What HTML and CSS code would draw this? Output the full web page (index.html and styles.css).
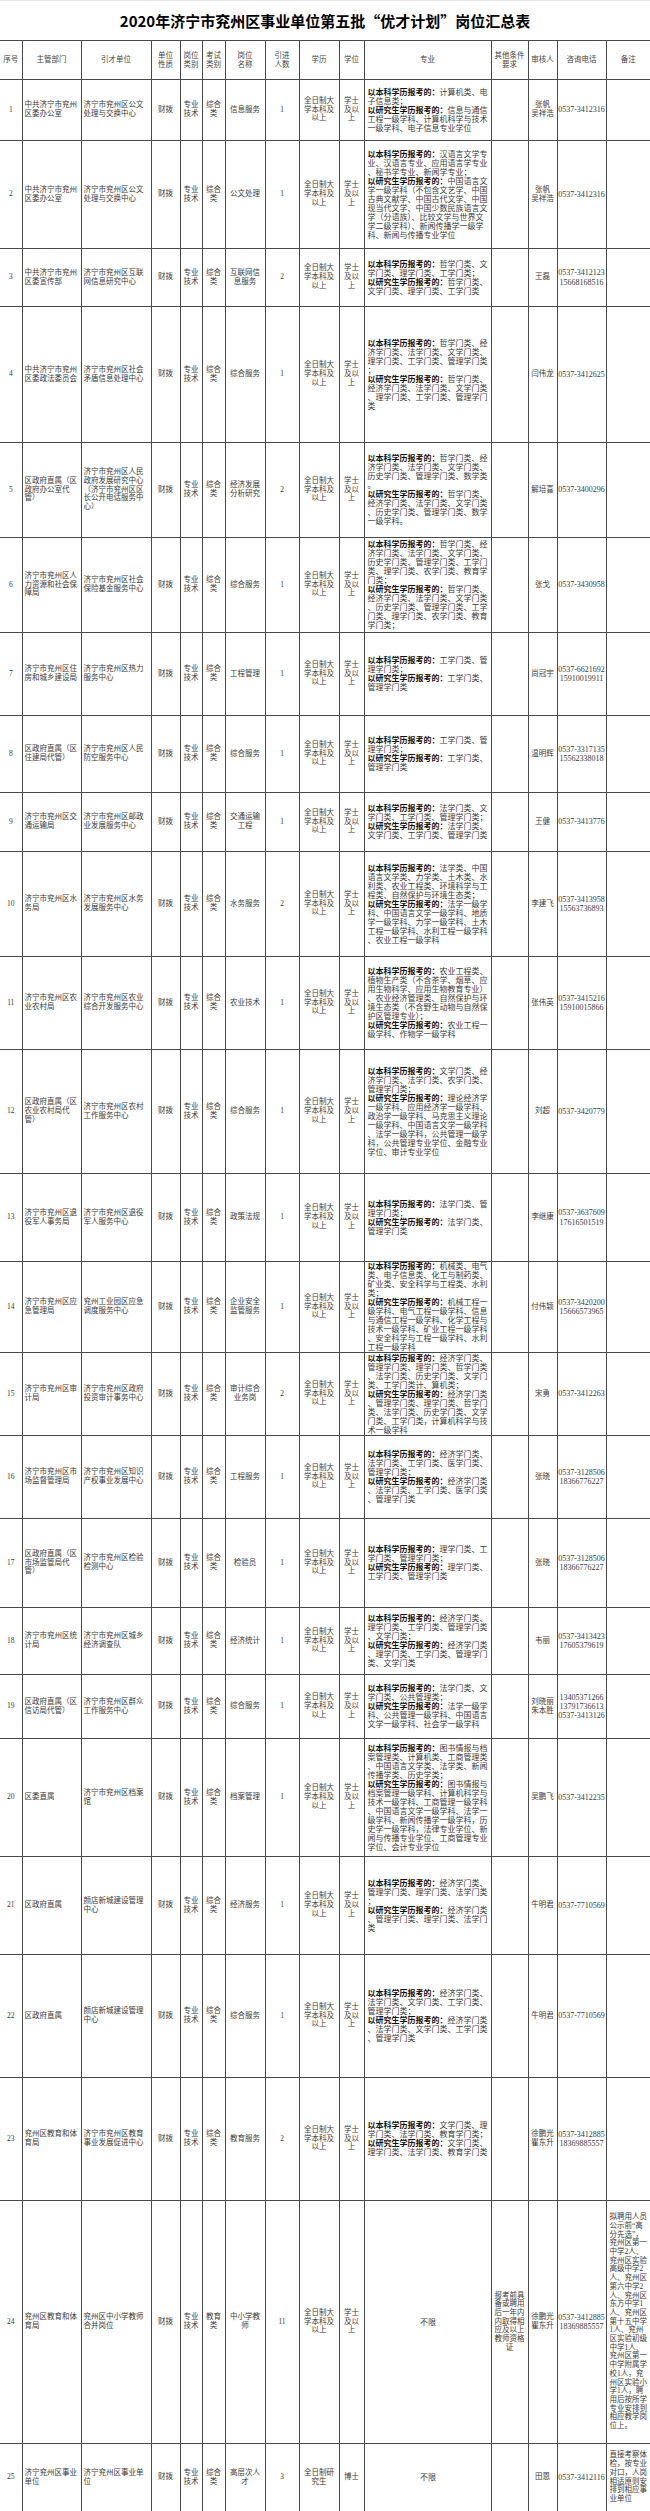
FILE: index.html
```html
<!DOCTYPE html>
<html lang="zh-CN">
<head>
<meta charset="utf-8">
<title>2020年济宁市兖州区事业单位第五批“优才计划”岗位汇总表</title>
<link rel="stylesheet" href="styles.css">
</head>
<body>
<div class="page">
  <h1 class="title">2020年济宁市兖州区事业单位第五批“优才计划”岗位汇总表</h1>
  <table class="grid">
    <colgroup>
      <col class="c-no"><col class="c-dept"><col class="c-unit"><col class="c-nature"><col class="c-type"><col class="c-exam"><col class="c-post"><col class="c-num"><col class="c-edu"><col class="c-deg"><col class="c-major"><col class="c-other"><col class="c-check"><col class="c-tel"><col class="c-note">
    </colgroup>
    <thead>
      <tr>
        <th>序号</th><th>主管部门</th><th>引才单位</th><th>单位<br>性质</th><th>岗位<br>类别</th><th>考试<br>类别</th><th>岗位<br>名称</th><th>引进<br>人数</th><th>学历</th><th>学位</th><th>专业</th><th>其他条件<br>要求</th><th>审核人</th><th>咨询电话</th><th>备注</th>
      </tr>
    </thead>
    <tbody>
      <tr>
        <td>1</td><td>中共济宁市兖州区委办公室</td><td>济宁市兖州区公文处理与交换中心</td><td>财拨</td><td>专业技术</td><td>综合类</td><td>信息服务</td><td>1</td><td>全日制大学本科及以上</td><td>学士及以上</td>
        <td><b>以本科学历报考的：</b>计算机类、电子信息类；<br><b>以研究生学历报考的：</b>信息与通信工程一级学科、计算机科学与技术一级学科、电子信息专业学位</td>
        <td></td><td>张帆<br>吴祥浩</td><td>0537-3412316</td><td></td>
      </tr>
      <tr>
        <td>2</td><td>中共济宁市兖州区委办公室</td><td>济宁市兖州区公文处理与交换中心</td><td>财拨</td><td>专业技术</td><td>综合类</td><td>公文处理</td><td>1</td><td>全日制大学本科及以上</td><td>学士及以上</td>
        <td><b>以本科学历报考的：</b>汉语言文学专业、汉语言专业、应用语言学专业、秘书学专业、新闻学专业；<br><b>以研究生学历报考的：</b>中国语言文学一级学科（不包含文艺学、中国古典文献学、中国古代文学、中国现当代文学、中国少数民族语言文学（分语族）、比较文学与世界文学二级学科）、新闻传播学一级学科、新闻与传播专业学位</td>
        <td></td><td>张帆<br>吴祥浩</td><td>0537-3412316</td><td></td>
      </tr>
      <tr>
        <td>3</td><td>中共济宁市兖州区委宣传部</td><td>济宁市兖州区互联网信息研究中心</td><td>财拨</td><td>专业技术</td><td>综合类</td><td>互联网信息服务</td><td>2</td><td>全日制大学本科及以上</td><td>学士及以上</td>
        <td><b>以本科学历报考的：</b>哲学门类、文学门类、理学门类、工学门类；<br><b>以研究生学历报考的：</b>哲学门类、文学门类、理学门类、工学门类</td>
        <td></td><td>王磊</td><td>0537-3412123<br>15668168516</td><td></td>
      </tr>
      <tr>
        <td>4</td><td>中共济宁市兖州区委政法委员会</td><td>济宁市兖州区社会矛盾信息处理中心</td><td>财拨</td><td>专业技术</td><td>综合类</td><td>综合服务</td><td>1</td><td>全日制大学本科及以上</td><td>学士及以上</td>
        <td><b>以本科学历报考的：</b>哲学门类、经济学门类、法学门类、文学门类、理学门类、工学门类、管理学门类；<br><b>以研究生学历报考的：</b>哲学门类、经济学门类、法学门类、文学门类、理学门类、工学门类、管理学门类</td>
        <td></td><td>闫伟龙</td><td>0537-3412625</td><td></td>
      </tr>
      <tr>
        <td>5</td><td>区政府直属（区政府办公室代管）</td><td>济宁市兖州区人民政府发展研究中心（济宁市兖州区区长公开电话服务中心）</td><td>财拨</td><td>专业技术</td><td>综合类</td><td>经济发展分析研究</td><td>2</td><td>全日制大学本科及以上</td><td>学士及以上</td>
        <td><b>以本科学历报考的：</b>哲学门类、经济学门类、法学门类、文学门类、历史学门类、管理学门类、数学类。<br><b>以研究生学历报考的：</b>哲学门类、经济学门类、法学门类、文学门类、历史学门类、管理学门类、数学一级学科。</td>
        <td></td><td>解培喜</td><td>0537-3400296</td><td></td>
      </tr>
      <tr>
        <td>6</td><td>济宁市兖州区人力资源和社会保障局</td><td>济宁市兖州区社会保险基金服务中心</td><td>财拨</td><td>专业技术</td><td>综合类</td><td>综合服务</td><td>1</td><td>全日制大学本科及以上</td><td>学士及以上</td>
        <td><b>以本科学历报考的：</b>哲学门类、经济学门类、法学门类、文学门类、历史学门类、管理学门类、工学门类、理学门类、农学门类、教育学门类；<br><b>以研究生学历报考的：</b>哲学门类、经济学门类、法学门类、文学门类、历史学门类、管理学门类、工学门类、理学门类、农学门类、教育学门类；</td>
        <td></td><td>张戈</td><td>0537-3430958</td><td></td>
      </tr>
      <tr>
        <td>7</td><td>济宁市兖州区住房和城乡建设局</td><td>济宁市兖州区热力服务中心</td><td>财拨</td><td>专业技术</td><td>综合类</td><td>工程管理</td><td>1</td><td>全日制大学本科及以上</td><td>学士及以上</td>
        <td><b>以本科学历报考的：</b>工学门类、管理学门类；<br><b>以研究生学历报考的：</b>工学门类、管理学门类</td>
        <td></td><td>尚冠宇</td><td>0537-6621692<br>15910019911</td><td></td>
      </tr>
      <tr>
        <td>8</td><td>区政府直属（区住建局代管）</td><td>济宁市兖州区人民防空服务中心</td><td>财拨</td><td>专业技术</td><td>综合类</td><td>综合服务</td><td>1</td><td>全日制大学本科及以上</td><td>学士及以上</td>
        <td><b>以本科学历报考的：</b>工学门类、管理学门类；<br><b>以研究生学历报考的：</b>工学门类、管理学门类</td>
        <td></td><td>温明辉</td><td>0537-3317135<br>15562338018</td><td></td>
      </tr>
      <tr>
        <td>9</td><td>济宁市兖州区交通运输局</td><td>济宁市兖州区邮政业发展服务中心</td><td>财拨</td><td>专业技术</td><td>综合类</td><td>交通运输工程</td><td>1</td><td>全日制大学本科及以上</td><td>学士及以上</td>
        <td><b>以本科学历报考的：</b>法学门类、文学门类、工学门类、管理学门类；<br><b>以研究生学历报考的：</b>法学门类、文学门类、工学门类、管理学门类</td>
        <td></td><td>王健</td><td>0537-3413776</td><td></td>
      </tr>
      <tr>
        <td>10</td><td>济宁市兖州区水务局</td><td>济宁市兖州区水务发展服务中心</td><td>财拨</td><td>专业技术</td><td>综合类</td><td>水务服务</td><td>2</td><td>全日制大学本科及以上</td><td>学士及以上</td>
        <td><b>以本科学历报考的：</b>法学类、中国语言文学类、力学类、土木类、水利类、农业工程类、环境科学与工程类、自然保护与环境生态类；<br><b>以研究生学历报考的：</b>法学一级学科、中国语言文学一级学科、地质学一级学科、力学一级学科、土木工程一级学科、水利工程一级学科、农业工程一级学科</td>
        <td></td><td>李建飞</td><td>0537-3413958<br>15563736893</td><td></td>
      </tr>
      <tr>
        <td>11</td><td>济宁市兖州区农业农村局</td><td>济宁市兖州区农业综合开发服务中心</td><td>财拨</td><td>专业技术</td><td>综合类</td><td>农业技术</td><td>1</td><td>全日制大学本科及以上</td><td>学士及以上</td>
        <td><b>以本科学历报考的：</b>农业工程类、植物生产类（不含茶学、烟草、应用生物科学、应用生物教育专业）、农业经济管理类、自然保护与环境生态类（不含野生动物与自然保护区管理专业）；<br><b>以研究生学历报考的：</b>农业工程一级学科、作物学一级学科</td>
        <td></td><td>张伟英</td><td>0537-3415216<br>15910015866</td><td></td>
      </tr>
      <tr>
        <td>12</td><td>区政府直属（区农业农村局代管）</td><td>济宁市兖州区农村工作服务中心</td><td>财拨</td><td>专业技术</td><td>综合类</td><td>综合服务</td><td>1</td><td>全日制大学本科及以上</td><td>学士及以上</td>
        <td><b>以本科学历报考的：</b>文学门类、经济学门类、法学门类、农学门类、管理学门类；<br><b>以研究生学历报考的：</b>理论经济学一级学科、应用经济学一级学科、政治学一级学科、马克思主义理论一级学科、中国语言文学一级学科、法学一级学科，公共管理一级学科，公共管理专业学位、金融专业学位、审计专业学位</td>
        <td></td><td>刘超</td><td>0537-3420779</td><td></td>
      </tr>
      <tr>
        <td>13</td><td>济宁市兖州区退役军人事务局</td><td>济宁市兖州区退役军人服务中心</td><td>财拨</td><td>专业技术</td><td>综合类</td><td>政策法规</td><td>1</td><td>全日制大学本科及以上</td><td>学士及以上</td>
        <td><b>以本科学历报考的：</b>法学门类、管理学门类；<br><b>以研究生学历报考的：</b>法学门类、管理学门类</td>
        <td></td><td>李继康</td><td>0537-3637609<br>17616501519</td><td></td>
      </tr>
      <tr>
        <td>14</td><td>济宁市兖州区应急管理局</td><td>兖州工业园区应急调度服务中心</td><td>财拨</td><td>专业技术</td><td>综合类</td><td>企业安全监管服务</td><td>1</td><td>全日制大学本科及以上</td><td>学士及以上</td>
        <td><b>以本科学历报考的：</b>机械类、电气类、电子信息类、化工与制药类、矿业类、安全科学与工程类、水利类；<br><b>以研究生学历报考的：</b>机械工程一级学科、电气工程一级学科、信息与通信工程一级学科、化学工程与技术一级学科、矿业工程一级学科、安全科学与工程一级学科、水利工程一级学科</td>
        <td></td><td>付伟颖</td><td>0537-3420200<br>15666573965</td><td></td>
      </tr>
      <tr>
        <td>15</td><td>济宁市兖州区审计局</td><td>济宁市兖州区政府投资审计事务中心</td><td>财拨</td><td>专业技术</td><td>综合类</td><td>审计综合业务岗</td><td>2</td><td>全日制大学本科及以上</td><td>学士及以上</td>
        <td><b>以本科学历报考的：</b>经济学门类、管理学门类、理学门类、哲学门类、法学门类、历史学门类、文学门类、工学门类计、算机类；<br><b>以研究生学历报考的：</b>经济学门类、管理学门类、理学门类、哲学门类、法学门类、历史学门类、文学门类、工学门类，计算机科学与技术一级学科</td>
        <td></td><td>宋勇</td><td>0537-3412263</td><td></td>
      </tr>
      <tr>
        <td>16</td><td>济宁市兖州区市场监督管理局</td><td>济宁市兖州区知识产权事业发展中心</td><td>财拨</td><td>专业技术</td><td>综合类</td><td>工程服务</td><td>1</td><td>全日制大学本科及以上</td><td>学士及以上</td>
        <td><b>以本科学历报考的：</b>经济学门类、法学门类、工学门类、医学门类、管理学门类；<br><b>以研究生学历报考的：</b>经济学门类、法学门类、工学门类、医学门类、管理学门类</td>
        <td></td><td>张晓</td><td>0537-3128506<br>18366776227</td><td></td>
      </tr>
      <tr>
        <td>17</td><td>区政府直属（区市场监管局代管）</td><td>济宁市兖州区检验检测中心</td><td>财拨</td><td>专业技术</td><td>综合类</td><td>检验员</td><td>1</td><td>全日制大学本科及以上</td><td>学士及以上</td>
        <td><b>以本科学历报考的：</b>理学门类、工学门类、管理学门类；<br><b>以研究生学历报考的：</b>理学门类、工学门类、管理学门类</td>
        <td></td><td>张晓</td><td>0537-3128506<br>18366776227</td><td></td>
      </tr>
      <tr>
        <td>18</td><td>济宁市兖州区统计局</td><td>济宁市兖州区城乡经济调查队</td><td>财拨</td><td>专业技术</td><td>综合类</td><td>经济统计</td><td>1</td><td>全日制大学本科及以上</td><td>学士及以上</td>
        <td><b>以本科学历报考的：</b>经济学门类、理学门类、工学门类、管理学门类、文学门类；<br><b>以研究生学历报考的：</b>经济学门类、理学门类、工学门类、管理学门类、文学门类</td>
        <td></td><td>韦丽</td><td>0537-3413423<br>17605379619</td><td></td>
      </tr>
      <tr>
        <td>19</td><td>区政府直属（区信访局代管）</td><td>济宁市兖州区群众工作服务中心</td><td>财拨</td><td>专业技术</td><td>综合类</td><td>综合服务</td><td>1</td><td>全日制大学本科及以上</td><td>学士及以上</td>
        <td><b>以本科学历报考的：</b>法学门类、文学门类、公共管理类；<br><b>以研究生学历报考的：</b>法学一级学科、公共管理一级学科、中国语言文学一级学科、社会学一级学科</td>
        <td></td><td>刘晓丽<br>朱本胜</td><td>13405371266<br>13791736613<br>0537-3413126</td><td></td>
      </tr>
      <tr>
        <td>20</td><td>区委直属</td><td>济宁市兖州区档案馆</td><td>财拨</td><td>专业技术</td><td>综合类</td><td>档案管理</td><td>1</td><td>全日制大学本科及以上</td><td>学士及以上</td>
        <td><b>以本科学历报考的：</b>图书情报与档案管理类、计算机类、工商管理类、中国语言文学类、法学类、新闻传播学类、历史学类；<br><b>以研究生学历报考的：</b>图书情报与档案管理一级学科、计算机科学与技术一级学科、工商管理一级学科、中国语言文学一级学科、法学一级学科、新闻传播学一级学科，历史学一级学科，法律专业学位、新闻与传播专业学位、工商管理专业学位、会计专业学位</td>
        <td></td><td>吴鹏飞</td><td>0537-3412235</td><td></td>
      </tr>
      <tr>
        <td>21</td><td>区政府直属</td><td>颜店新城建设管理中心</td><td>财拨</td><td>专业技术</td><td>综合类</td><td>经济服务</td><td>1</td><td>全日制大学本科及以上</td><td>学士及以上</td>
        <td><b>以本科学历报考的：</b>经济学门类、管理学门类、理学门类、法学门类；<br><b>以研究生学历报考的：</b>经济学门类、管理学门类、理学门类、法学门类</td>
        <td></td><td>牛明君</td><td>0537-7710569</td><td></td>
      </tr>
      <tr>
        <td>22</td><td>区政府直属</td><td>颜店新城建设管理中心</td><td>财拨</td><td>专业技术</td><td>综合类</td><td>综合服务</td><td>1</td><td>全日制大学本科及以上</td><td>学士及以上</td>
        <td><b>以本科学历报考的：</b>经济学门类、法学门类、文学门类、工学门类、管理学门类；<br><b>以研究生学历报考的：</b>经济学门类、法学门类、文学门类、工学门类、管理学门类</td>
        <td></td><td>牛明君</td><td>0537-7710569</td><td></td>
      </tr>
      <tr>
        <td>23</td><td>兖州区教育和体育局</td><td>济宁市兖州区教育事业发展促进中心</td><td>财拨</td><td>专业技术</td><td>综合类</td><td>教育服务</td><td>2</td><td>全日制大学本科及以上</td><td>学士及以上</td>
        <td><b>以本科学历报考的：</b>文学门类、理学门类、法学门类、教育学门类；<br><b>以研究生学历报考的：</b>文学门类、理学门类、法学门类、教育学门类</td>
        <td></td><td>徐鹏光<br>瞿东升</td><td>0537-3412885<br>18369885557</td><td></td>
      </tr>
      <tr>
        <td>24</td><td>兖州区教育和体育局</td><td>兖州区中小学教师合并岗位</td><td>财拨</td><td>专业技术</td><td>教育类</td><td>中小学教师</td><td>11</td><td>全日制大学本科及以上</td><td>学士及以上</td>
        <td class="open">不限</td>
        <td>报考前具备或聘用后一年内内取得相应及以上教师资格证</td><td>徐鹏光<br>瞿东升</td><td>0537-3412885<br>18369885557</td>
        <td>拟聘用人员公示前“高分先选”，兖州区第一中学2人、兖州区实验高级中学2人、兖州区第六中学2人、兖州区东方中学1人、兖州区第十五中学1人、兖州区实验初级中学1人、兖州区第一中学附属学校1人，兖州区实验小学1人，聘用后按所学专业安排到相应教学岗位上。</td>
      </tr>
      <tr>
        <td>25</td><td>济宁兖州区事业单位</td><td>济宁兖州区事业单位</td><td>财拨</td><td>专业技术</td><td>综合类</td><td>高层次人才</td><td>3</td><td>全日制研究生</td><td>博士</td>
        <td class="open">不限</td>
        <td></td><td>田恩</td><td>0537-3412116</td>
        <td>直接考察体检，按专业对口，人岗相适原则安排到相应事业单位</td>
      </tr>
    </tbody>
  </table>
</div>
</body>
</html>
```

FILE: styles.css
```css
* {
  box-sizing: border-box;
}

body {
  margin: 0;
  background: #ffffff;
  font-family: "Liberation Serif", "Noto Sans CJK SC", serif;
  color: #3a3a3a;
}

.page {
  width: 650px;
}

.title {
  margin: 0;
  height: 40px;
  display: flex;
  align-items: center;
  justify-content: center;
  font-family: "Noto Sans CJK SC", sans-serif;
  font-weight: 700;
  font-size: 15px;
  line-height: 1;
  color: #000000;
  border-top: 1px solid #e4e4e4;
}

.grid {
  width: 650px;
  table-layout: fixed;
  border-collapse: collapse;
}

.c-no { width: 22px; }
.c-dept { width: 59px; }
.c-unit { width: 70px; }
.c-nature { width: 29px; }
.c-type { width: 22px; }
.c-exam { width: 23px; }
.c-post { width: 40px; }
.c-num { width: 34px; }
.c-edu { width: 40px; }
.c-deg { width: 25px; }
.c-major { width: 127px; }
.c-other { width: 37px; }
.c-check { width: 29px; }
.c-tel { width: 49px; }
.c-note { width: 44px; }

.grid th,
.grid td {
  border: 1px solid #4a4a4a;
  padding: 0 2px;
  font-size: 7.5px;
  line-height: 8.7px;
  font-weight: 400;
  text-align: center;
  vertical-align: middle;
  overflow: hidden;
}

.grid th:first-child,
.grid td:first-child {
  border-left: none;
}

.grid th:last-child,
.grid td:last-child {
  border-right: none;
}

.grid th {
  color: #444444;
  line-height: 9.3px;
}

.grid thead tr {
  height: 39px;
}

.grid td:nth-child(2),
.grid td:nth-child(3) {
  text-align: left;
}

.grid td:nth-child(11) {
  text-align: left;
  font-size: 8px;
  line-height: 9px;
  padding: 0 2px 0 3px;
  line-break: anywhere;
}

.grid td:nth-child(11) b {
  font-weight: 700;
  color: #111111;
}

.grid td.open {
  text-align: center;
}

.grid td:nth-child(12) {
  padding: 0 2px;
}

.grid td:nth-child(14) {
  font-family: "Liberation Serif", serif;
  font-size: 8px;
  line-height: 9.2px;
  white-space: nowrap;
  padding: 0;
}

.grid td:nth-child(15) {
  text-align: left;
  padding: 0 2px 0 3px;
}

/* row heights (grid line to grid line) */
.grid tbody tr:nth-child(1) { height: 61px; }
.grid tbody tr:nth-child(2) { height: 108px; }
.grid tbody tr:nth-child(3) { height: 58px; }
.grid tbody tr:nth-child(4) { height: 136px; }
.grid tbody tr:nth-child(5) { height: 95px; }
.grid tbody tr:nth-child(6) { height: 95px; }
.grid tbody tr:nth-child(7) { height: 83px; }
.grid tbody tr:nth-child(8) { height: 77px; }
.grid tbody tr:nth-child(9) { height: 59px; }
.grid tbody tr:nth-child(10) { height: 105px; }
.grid tbody tr:nth-child(11) { height: 93px; }
.grid tbody tr:nth-child(12) { height: 124px; }
.grid tbody tr:nth-child(13) { height: 88px; }
.grid tbody tr:nth-child(14) { height: 90px; }
.grid tbody tr:nth-child(15) { height: 83px; }
.grid tbody tr:nth-child(16) { height: 83px; }
.grid tbody tr:nth-child(17) { height: 89px; }
.grid tbody tr:nth-child(18) { height: 67px; }
.grid tbody tr:nth-child(19) { height: 64px; }
.grid tbody tr:nth-child(20) { height: 118px; }
.grid tbody tr:nth-child(21) { height: 98px; }
.grid tbody tr:nth-child(22) { height: 123px; }
.grid tbody tr:nth-child(23) { height: 123px; }
.grid tbody tr:nth-child(24) { height: 243px; }
.grid tbody tr:nth-child(25) { height: 68px; }
```
